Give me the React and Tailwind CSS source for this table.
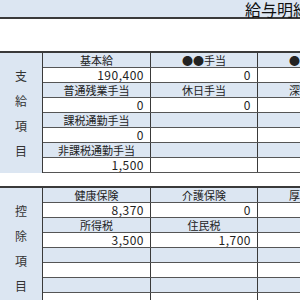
import React from 'react'

const earnings = [
  [['基本給', '190,400'], ['●●手当', '0'], ['●●手当', '0']],
  [['普通残業手当', '0'], ['休日手当', '0'], ['深夜手当', '0']],
  [['課税通勤手当', '0'], ['', ''], ['', '']],
  [['非課税通勤手当', '1,500'], ['', ''], ['', '']],
]

const deductions = [
  [['健康保険', '8,370'], ['介護保険', '0'], ['厚生年金', '0']],
  [['所得税', '3,500'], ['住民税', '1,700'], ['', '']],
  [['', ''], ['', ''], ['', '']],
  [['', ''], ['', ''], ['', '']],
]

const colW = ['w-[108px]', 'w-[107px]', 'w-[107px]']

const Section = ({ labels, rows }) => (
  <div className="flex border-t-2 border-[#3a3a3a]">
    {/* vertical label column */}
    <div className="w-[43px] shrink-0 bg-[#dce6f2] border-r border-[#3a3a3a] flex flex-col items-center justify-center text-[12px] text-[#333]">
      {labels.map((c) => (
        <span key={c} className="h-[25px] leading-[25px]">{c}</span>
      ))}
    </div>
    <div className="flex flex-col">
      {rows.map((row, i) => (
        <React.Fragment key={i}>
          <div className="flex h-[15px] border-b border-[#555] bg-[#dce6f2]">
            {row.map(([label], j) => (
              <div key={j} className={`${colW[j]} shrink-0 border-r border-[#3a3a3a] text-center text-[11px] leading-[14px] text-[#222]`}>
                {label}
              </div>
            ))}
          </div>
          <div className="flex h-[15px] border-b border-[#555] bg-white">
            {row.map(([, value], j) => (
              <div key={j} className={`${colW[j]} shrink-0 border-r border-[#3a3a3a] text-right pr-[6px] text-[12px] tracking-[0.5px] leading-[14px] text-[#222]`}>
                {value}
              </div>
            ))}
          </div>
        </React.Fragment>
      ))}
    </div>
  </div>
)

export default function App() {
  return (
    <div className="w-[300px] h-[300px] overflow-hidden bg-white font-['Noto_Sans_CJK_JP',sans-serif]">
      <div className="w-[380px]">
        {/* title bar */}
        <div className="h-[19px] bg-[#dce6f2] border-b-2 border-[#3a3a3a] pl-[245px] text-[16px] leading-[19px] text-[#111] whitespace-nowrap">
          給与明細書
        </div>
        <div className="h-[32px]" />
        <Section labels={['支', '給', '項', '目']} rows={earnings} />
        <div className="h-[13px]" />
        <Section labels={['控', '除', '項', '目']} rows={deductions} />
      </div>
    </div>
  )
}
